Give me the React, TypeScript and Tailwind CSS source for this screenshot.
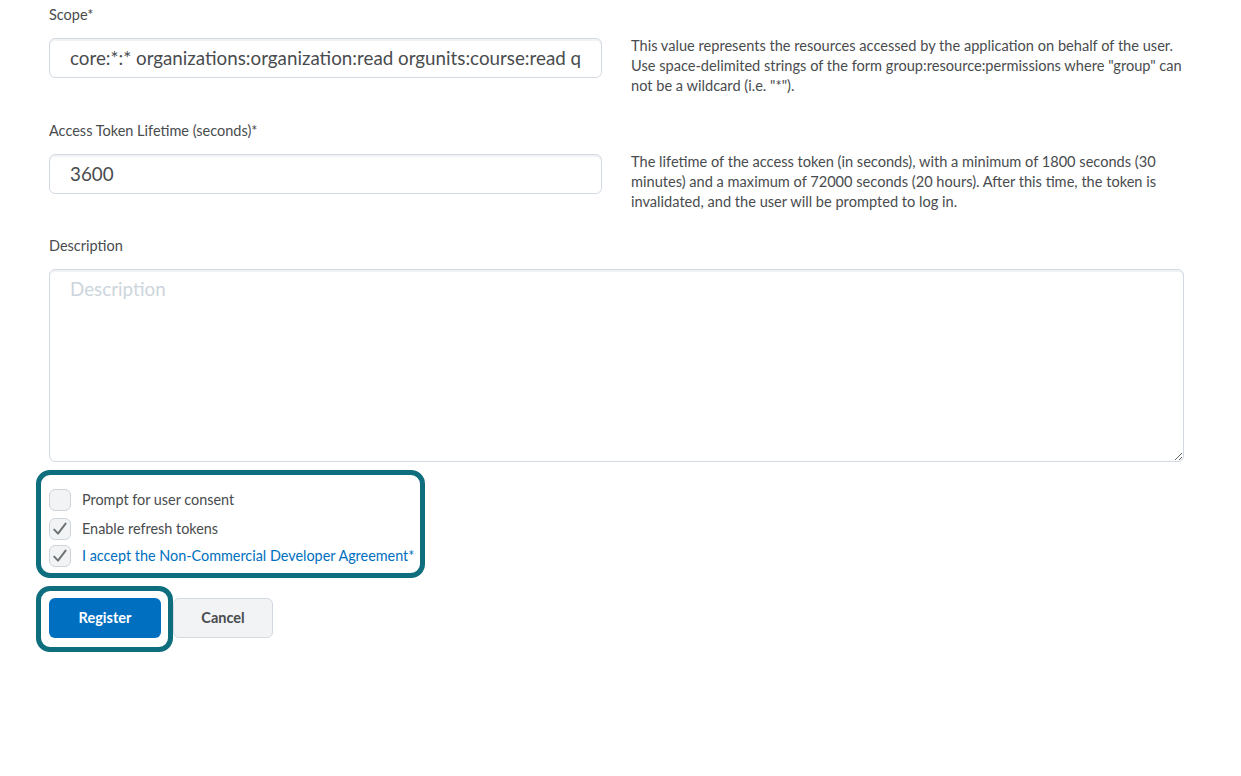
import React from "react";

const font = { fontFamily: "Lato, 'Open Sans', sans-serif" };

function Check({ checked }: { checked: boolean }) {
  return (
    <span className="flex h-[22px] w-[22px] shrink-0 items-center justify-center rounded-[6px] border border-[#cdd5dc] bg-[#f1f3f5]">
      {checked && (
        <svg width="18" height="18" viewBox="0 0 18 18" fill="none">
          <path d="M3.2 9.6 L7 13.6 L14.6 3.6" stroke="#6e7376" strokeWidth="2" strokeLinecap="round" strokeLinejoin="round" />
        </svg>
      )}
    </span>
  );
}

export default function App() {
  return (
    <div className="min-h-[776px] w-[1241px] bg-white pl-[49px] pt-[5px] text-[#494c4e]" style={font}>
      <div className="h-[20px] text-[14.5px] leading-[20px]">Scope*</div>
      <div className="mt-[13px] flex items-start gap-[29px]">
        <input
          readOnly
          value="core:*:* organizations:organization:read orgunits:course:read quizzing:quizzes:read"
          className="h-[40px] w-[553px] rounded-[6px] border border-[#d3d9e3] bg-white pb-[2px] pl-[20px] pr-[20px] text-[18.8px] text-[#494c4e] shadow-[inset_0_2px_0_0_rgba(181,189,194,0.2)] outline-none"
          style={font}
        />
        <p className="-mt-[2px] w-[553px] text-[14.6px] leading-[20px] text-[#494c4e]">
          This value represents the resources accessed by the application on behalf of the user. Use space-delimited strings of the form group:resource:permissions where "group" can not be a wildcard (i.e. "*").
        </p>
      </div>

      <div className="mt-[25px] h-[20px] text-[14.5px] leading-[20px]">Access Token Lifetime (seconds)*</div>
      <div className="mt-[13px] flex items-start gap-[29px]">
        <input
          readOnly
          value="3600"
          className="h-[40px] w-[553px] rounded-[6px] border border-[#d3d9e3] bg-white pb-[2px] pl-[20px] pr-[20px] text-[18.8px] text-[#494c4e] shadow-[inset_0_2px_0_0_rgba(181,189,194,0.2)] outline-none"
          style={font}
        />
        <p className="-mt-[2px] w-[553px] text-[14.6px] leading-[20px] text-[#494c4e]">
          The lifetime of the access token (in seconds), with a minimum of 1800 seconds (30 minutes) and a maximum of 72000 seconds (20 hours). After this time, the token is invalidated, and the user will be prompted to log in.
        </p>
      </div>

      <div className="mt-[24px] h-[20px] text-[14.5px] leading-[20px]">Description</div>
      <textarea
        placeholder="Description"
        className="mt-[13px] block h-[193px] w-[1135px] rounded-[6px] border border-[#d3d9e3] bg-white px-[20px] pt-[7px] text-[18.8px] leading-[24px] text-[#494c4e] shadow-[inset_0_2px_0_0_rgba(181,189,194,0.2)] outline-none placeholder:text-[#cdd5dc]"
        style={font}
      />

      <div className="relative mt-[27px] flex w-fit flex-col text-[14.4px]">
        <label className="flex h-[22px] items-center gap-[11px]">
          <Check checked={false} />
          <span>Prompt for user consent</span>
        </label>
        <label className="mt-[7px] flex h-[22px] items-center gap-[11px]">
          <Check checked={true} />
          <span>Enable refresh tokens</span>
        </label>
        <label className="mt-[5px] flex h-[22px] items-center gap-[11px]">
          <Check checked={true} />
          <span className="text-[#006fbf]">I accept the Non-Commercial Developer Agreement*</span>
        </label>
        <div className="pointer-events-none absolute left-[-13px] top-[-19px] h-[108px] w-[389px] rounded-[14px] border-[5px] border-[#0f6e7e]" />
      </div>

      <div className="mt-[31px] flex items-center gap-[12px]">
        <div className="relative">
          <button className="h-[40px] w-[112px] rounded-[6px] bg-[#006fbf] text-[14.5px] font-bold text-white" style={font}>
            Register
          </button>
          <div className="pointer-events-none absolute left-[-13px] top-[-12px] h-[66px] w-[137px] rounded-[14px] border-[5px] border-[#0f6e7e]" />
        </div>
        <button className="h-[40px] w-[100px] rounded-[6px] border border-[#d3d9e3] bg-[#f1f3f5] text-[14.5px] font-bold text-[#494c4e]" style={font}>
          Cancel
        </button>
      </div>
    </div>
  );
}
